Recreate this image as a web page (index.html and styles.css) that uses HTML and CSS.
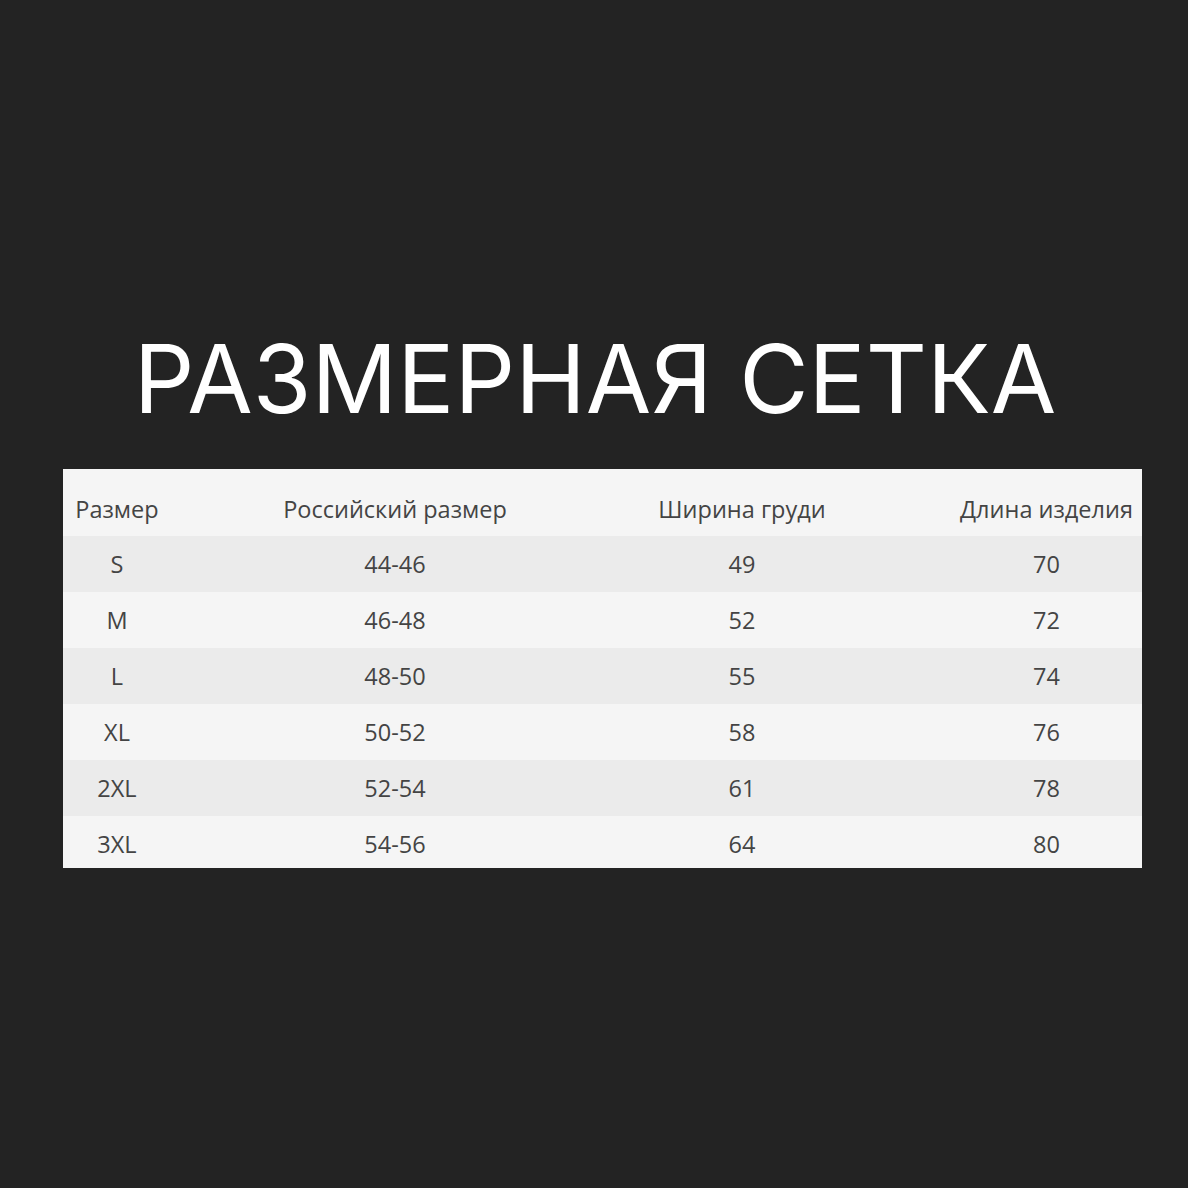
FILE: index.html
```html
<!DOCTYPE html>
<html lang="ru">
<head>
<meta charset="utf-8">
<link rel="stylesheet" href="styles.css">
</head>
<body>
<main class="page">
  <h1 class="title">РАЗМЕРНАЯ СЕТКА</h1>
  <div class="table">
    <div class="row head">
      <div class="c c1">Размер</div>
      <div class="c c2">Российский размер</div>
      <div class="c c3">Ширина груди</div>
      <div class="c c4">Длина изделия</div>
    </div>
    <div class="row shade">
      <div class="c c1">S</div><div class="c c2">44-46</div><div class="c c3">49</div><div class="c c4">70</div>
    </div>
    <div class="row">
      <div class="c c1">M</div><div class="c c2">46-48</div><div class="c c3">52</div><div class="c c4">72</div>
    </div>
    <div class="row shade">
      <div class="c c1">L</div><div class="c c2">48-50</div><div class="c c3">55</div><div class="c c4">74</div>
    </div>
    <div class="row">
      <div class="c c1">XL</div><div class="c c2">50-52</div><div class="c c3">58</div><div class="c c4">76</div>
    </div>
    <div class="row shade">
      <div class="c c1">2XL</div><div class="c c2">52-54</div><div class="c c3">61</div><div class="c c4">78</div>
    </div>
    <div class="row last">
      <div class="c c1">3XL</div><div class="c c2">54-56</div><div class="c c3">64</div><div class="c c4">80</div>
    </div>
  </div>
</main>
</body>
</html>
```
FILE: styles.css
```css
html, body {
  margin: 0;
  padding: 0;
  background: #232323;
}
.page {
  width: 1188px;
  height: 1188px;
  display: flex;
  flex-direction: column;
  align-items: center;
  padding-top: 331px;
  box-sizing: border-box;
}
.title {
  margin: 0;
  font-family: Inter, "Liberation Sans", sans-serif;
  font-weight: 400;
  font-size: 95px;
  line-height: 95px;
  color: #ffffff;
  letter-spacing: 0;
  margin-left: 2px;
}
.table {
  margin-top: 43px;
  align-self: flex-start;
  margin-left: 63px;
  width: 1079px;
  background: #f5f5f5;
  font-family: "Open Sans", "Liberation Sans", sans-serif;
  font-size: 23.5px;
  color: #444444;
}
.row {
  display: grid;
  grid-template-columns: 108px 448px 246px 277px;
  height: 56px;
  align-items: center;
  background: #f5f5f5;
}
.row.shade {
  background: #ebebeb;
}
.row.head {
  height: 67px;
  padding-top: 13px;
  box-sizing: border-box;
}
.row.last {
  height: 52px;
  padding-top: 4px;
  box-sizing: border-box;
}
.c {
  text-align: center;
  line-height: 30px;
  white-space: nowrap;
}
.c4 {
  padding-left: 86px;
}
```
